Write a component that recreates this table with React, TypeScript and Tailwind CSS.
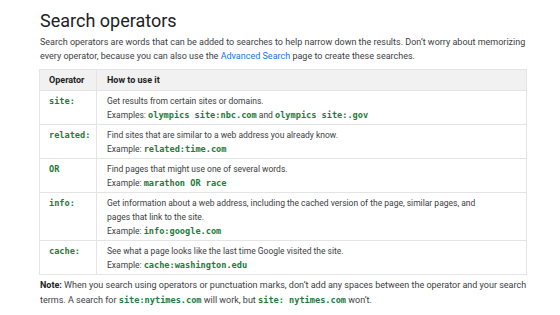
import React from 'react';

type Part = { text: string; code?: boolean };
type Row = { op: string; lines: Part[][] };

const c = (text: string): Part => ({ text, code: true });
const t = (text: string): Part => ({ text });

const rows: Row[] = [
  {
    op: 'site:',
    lines: [
      [t('Get results from certain sites or domains.')],
      [t('Examples: '), c('olympics site:nbc.com'), t(' and '), c('olympics site:.gov')],
    ],
  },
  {
    op: 'related:',
    lines: [
      [t('Find sites that are similar to a web address you already know.')],
      [t('Example: '), c('related:time.com')],
    ],
  },
  {
    op: 'OR',
    lines: [
      [t('Find pages that might use one of several words.')],
      [t('Example: '), c('marathon OR race')],
    ],
  },
  {
    op: 'info:',
    lines: [
      [t('Get information about a web address, including the cached version of the page, similar pages, and')],
      [t('pages that link to the site.')],
      [t('Example: '), c('info:google.com')],
    ],
  },
  {
    op: 'cache:',
    lines: [
      [t('See what a page looks like the last time Google visited the site.')],
      [t('Example: '), c('cache:washington.edu')],
    ],
  },
];

const Code: React.FC<{ children: React.ReactNode }> = ({ children }) => (
  <code className="font-['DejaVu_Sans_Mono',monospace] text-[8.6px] font-bold text-[#237a3b] whitespace-pre">
    {children}
  </code>
);

export default function App() {
  return (
    <div className="min-h-screen w-full bg-white font-['Roboto',sans-serif] text-[#3c4043]">
      <div className="ml-[39px] w-[488px] pt-[10px]">
        <h1 className="pl-[1px] text-[18px] leading-[22px] text-[#202124]">Search operators</h1>
        <p className="mt-[3px] whitespace-nowrap pl-[1px] text-[9px] leading-[14px]">
          Search operators are words that can be added to searches to help narrow down the results. Don’t
          worry about memorizing
          <br />
          every operator, because you can also use the <span className="text-[#1a73e8]">Advanced Search</span>{' '}
          page to create these searches.
        </p>

        <table className="mt-[6px] w-full table-fixed border-collapse border border-[#e4e4e4] text-[8.5px] leading-[14px]">
          <colgroup>
            <col className="w-[57px]" />
            <col />
          </colgroup>
          <thead>
            <tr className="h-[21px] bg-[#f1f1f1] text-left text-[9px] text-[#202124]">
              <th className="border-r border-[#e4e4e4] px-[9px] font-bold">Operator</th>
              <th className="px-[10px] font-bold">How to use it</th>
            </tr>
          </thead>
          <tbody>
            {rows.map((row) => (
              <tr key={row.op} className="border-t border-[#e4e4e4] align-top">
                <td className="border-r border-[#e4e4e4] px-[9px] pt-[3px] pb-[2px]">
                  <Code>{row.op}</Code>
                </td>
                <td className="whitespace-nowrap px-[10px] pt-[3px] pb-[2px]">
                  {row.lines.map((line, i) => (
                    <div key={i}>
                      {line.map((p, j) => (p.code ? <Code key={j}>{p.text}</Code> : <span key={j}>{p.text}</span>))}
                    </div>
                  ))}
                </td>
              </tr>
            ))}
          </tbody>
        </table>

        <p className="mt-[3px] whitespace-nowrap pl-[1px] text-[9px] leading-[15px]">
          <span className="font-bold text-[#202124]">Note:</span> When you search using operators or punctuation
          marks, don’t add any spaces between the operator and your search
          <br />
          terms. A search for <Code>site:nytimes.com</Code> will work, but <Code>site: nytimes.com</Code> won’t.
        </p>
      </div>
    </div>
  );
}
